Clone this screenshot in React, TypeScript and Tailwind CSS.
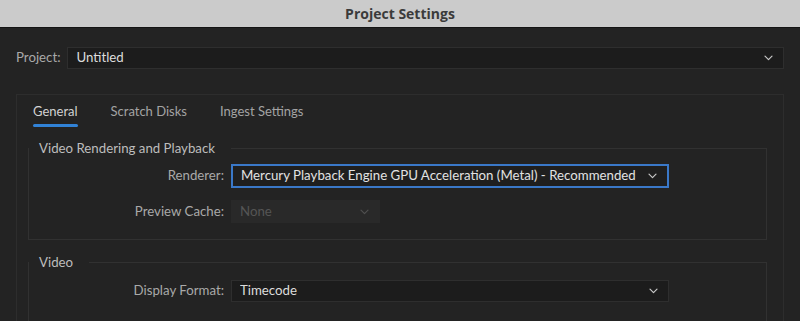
import React from "react";

const Chevron = ({ dim = false }: { dim?: boolean }) => (
  <svg width="9" height="6" viewBox="0 0 9 6" className="shrink-0">
    <path
      d="M1 1.2l3.5 3.5 3.5-3.5"
      fill="none"
      stroke={dim ? "#4f4f4f" : "#c8c8c8"}
      strokeWidth="1.2"
      strokeLinecap="round"
      strokeLinejoin="round"
    />
  </svg>
);

type SelectProps = {
  value: string;
  width: string;
  height: string;
  focused?: boolean;
  disabled?: boolean;
};

const Select = ({ value, width, height, focused, disabled }: SelectProps) => {
  let box = "bg-[#1c1c1c] border border-[#2e2e2e] text-[#dcdcdc]";
  if (focused) box = "bg-[#1f1f1f] border-2 border-[#3a78c8] text-[#e2e2e2]";
  if (disabled) box = "bg-[#292929] border border-[#292929] text-[#555555]";
  return (
    <div className={`flex items-center justify-between pl-[8px] pr-[10px] text-[13.25px] ${width} ${height} ${box}`}>
      <span className="truncate">{value}</span>
      <Chevron dim={disabled} />
    </div>
  );
};

const Row = ({ label, children }: { label: string; children: React.ReactNode }) => (
  <div className="flex items-center">
    <div className="w-[195px] pr-[7px] text-right text-[13.25px] text-[#a9a9a9] box-content">{label}</div>
    {children}
  </div>
);

const Group = ({ title, children, className = "" }: { title: string; children: React.ReactNode; className?: string }) => (
  <fieldset className={`border border-[#313131] ml-[11px] mr-[16px] px-0 ${className}`}>
    <legend className="pl-[10px] pr-[16px] text-[13.25px] leading-[16px] text-[#bdbdbd]">{title}</legend>
    {children}
  </fieldset>
);

export default function App() {
  const tabs = ["General", "Scratch Disks", "Ingest Settings"];
  return (
    <div
      className="w-[800px] h-[321px] overflow-hidden bg-[#232323] flex flex-col"
      style={{ fontFamily: "Lato, 'Open Sans', sans-serif" }}
    >
      {/* title bar */}
      <div className="h-[28px] shrink-0 bg-[#cbcbcb] border-b border-[#141414] flex items-center justify-center">
        <span className="text-[14px] font-bold text-[#3b3b3b]" style={{ fontFamily: "'Open Sans', sans-serif" }}>
          Project Settings
        </span>
      </div>

      {/* project row */}
      <div className="flex items-center pl-[16px] pr-[16px] mt-[19px] gap-[7px]">
        <span className="text-[13.25px] text-[#a9a9a9]">Project:</span>
        <Select value="Untitled" width="flex-1" height="h-[22px]" />
      </div>

      {/* tab panel */}
      <div className="mt-[25px] mx-[16px] flex-1 border border-[#2d2d2d] border-b-0">
        <div className="flex gap-[33px] pl-[16px] pt-[7px]">
          {tabs.map((t, i) => (
            <div key={t} className="flex flex-col items-stretch">
              <span className={`text-[13px] leading-[18px] ${i === 0 ? "text-[#d2d2d2]" : "text-[#a3a3a3]"}`}>{t}</span>
              <div className={`h-[3px] mt-[4px] rounded-full ${i === 0 ? "bg-[#3182d6]" : "bg-transparent"}`} />
            </div>
          ))}
        </div>

        <Group title="Video Rendering and Playback" className="mt-[13px] pb-[16px]">
          <div className="flex flex-col gap-[12px] mt-[8px]">
            <Row label="Renderer:">
              <Select
                value="Mercury Playback Engine GPU Acceleration (Metal) - Recommended"
                width="w-[438px]"
                height="h-[24px]"
                focused
              />
            </Row>
            <Row label="Preview Cache:">
              <Select value="None" width="w-[149px]" height="h-[23px]" disabled />
            </Row>
          </div>
        </Group>

        <Group title="Video" className="mt-[14px] pb-[20px]">
          <div className="mt-[10px]">
            <Row label="Display Format:">
              <Select value="Timecode" width="w-[438px]" height="h-[22px]" />
            </Row>
          </div>
        </Group>
      </div>
    </div>
  );
}
